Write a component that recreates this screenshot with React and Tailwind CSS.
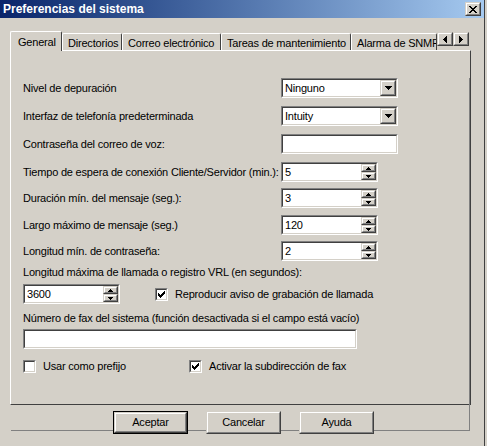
import React from "react";

// sunken field frame (classic Windows 2-pixel border)
const Sunken = ({ className = "", children }) => (
  <div className={`border border-t-[#808080] border-l-[#808080] border-b-white border-r-white ${className}`}>
    <div className="flex h-full w-full border border-t-[#404040] border-l-[#404040] border-b-[#d4d0c8] border-r-[#d4d0c8] bg-white">
      {children}
    </div>
  </div>
);

const Raised = ({ className = "", children }) => (
  <div className={`border border-t-[#d4d0c8] border-l-[#d4d0c8] border-b-[#404040] border-r-[#404040] bg-[#d4d0c8] ${className}`}>
    <div className="flex h-full w-full items-center justify-center border border-t-white border-l-white border-b-[#808080] border-r-[#808080]">
      {children}
    </div>
  </div>
);

const Combo = ({ value }) => (
  <Sunken className="h-[20px] w-[117px]">
    <div className="flex-1 pl-[2px] leading-[16px]">{value}</div>
    <Raised className="h-[16px] w-[16px]">
      <svg width="7" height="4" viewBox="0 0 7 4" shapeRendering="crispEdges">
        <path d="M0 0h7v1H0zM1 1h5v1H1zM2 2h3v1H2zM3 3h1v1H3z" fill="#000" />
      </svg>
    </Raised>
  </Sunken>
);

const Spin = ({ value }) => (
  <Sunken className="h-[20px] w-[97px]">
    <div className="flex-1 pl-[2px] leading-[16px]">{value}</div>
    <div className="flex w-[15px] flex-col">
      <Raised className="h-[8px] w-[15px]">
        <svg width="5" height="3" viewBox="0 0 5 3" shapeRendering="crispEdges">
          <path d="M2 0h1v1H2zM1 1h3v1H1zM0 2h5v1H0z" fill="#000" />
        </svg>
      </Raised>
      <Raised className="h-[8px] w-[15px]">
        <svg width="5" height="3" viewBox="0 0 5 3" shapeRendering="crispEdges">
          <path d="M0 0h5v1H0zM1 1h3v1H1zM2 2h1v1H2z" fill="#000" />
        </svg>
      </Raised>
    </div>
  </Sunken>
);

const Check = ({ checked }) => (
  <Sunken className="h-[13px] w-[13px] shrink-0">
    <div className="flex flex-1 items-center justify-center">
      {checked && (
        <svg width="7" height="7" viewBox="0 0 7 7" shapeRendering="crispEdges">
          <path d="M0 2h1v3H0zM1 3h1v3H1zM2 4h1v3H2zM3 3h1v3H3zM4 2h1v3H4zM5 1h1v3H5zM6 0h1v3H6z" fill="#000" />
        </svg>
      )}
    </div>
  </Sunken>
);

const Button = ({ children, isDefault }) => (
  <div className={`h-[23px] w-[75px] ${isDefault ? "border border-black" : ""}`}>
    <Raised className="h-full w-full">{children}</Raised>
  </div>
);

const Row = ({ label, mt, children }) => (
  <div className={`flex h-[20px] items-center ${mt}`}>
    <div className="w-[258px] whitespace-nowrap">{label}</div>
    {children}
  </div>
);

const tabs = [
  { name: "Directorios", w: "w-[60px]" },
  { name: "Correo electrónico", w: "w-[99px]" },
  { name: "Tareas de mantenimiento", w: "w-[130px]" },
  { name: "Alarma de SNMP", w: "w-[86px]" },
];

export default function App() {
  return (
    <div className="flex h-[446px] w-[487px] overflow-hidden bg-[#d4d0c8] font-['Liberation_Sans',Arial,sans-serif] text-[11px] tracking-[-0.2px] text-black">
      <div className="flex w-[484px] flex-col">
        {/* title bar */}
        <div className="flex h-[18px] items-center justify-between bg-gradient-to-r from-[#0a246a] to-[#a6caf0] pl-[3px] pr-[3px]">
          <span className="text-[12px] font-bold tracking-normal text-white">Preferencias del sistema</span>
          <Raised className="h-[14px] w-[16px]">
            <svg width="8" height="7" viewBox="0 0 8 7" shapeRendering="crispEdges">
              <path d="M0 0h2v1H0zM6 0h2v1H6zM1 1h2v1H1zM5 1h2v1H5zM2 2h4v1H2zM3 3h2v1H3zM2 4h4v1H2zM1 5h2v1H1zM5 5h2v1H5zM0 6h2v1H0zM6 6h2v1H6z" fill="#000" />
            </svg>
          </Raised>
        </div>

        <div className="pl-[10px]">
          {/* tab strip */}
          <div className="mt-[13px] flex h-[19px] items-end">
            <div className="relative z-10 -mb-px h-[20px] w-[52px] rounded-t-[2px] border-l border-t border-r border-l-white border-t-white border-r-[#404040] bg-[#d4d0c8] pl-[7px] pt-[2px]">
              General
            </div>
            {tabs.map((t) => (
              <div
                key={t.name}
                className={`h-[17px] ${t.w} overflow-hidden whitespace-nowrap rounded-t-[2px] border-l border-t border-r border-l-white border-t-white border-r-[#404040] pl-[5px] pt-px`}
              >
                {t.name}
              </div>
            ))}
            <div className="mb-[4px] flex self-end">
              <Raised className="h-[14px] w-[16px]">
                <svg width="4" height="7" viewBox="0 0 4 7" shapeRendering="crispEdges">
                  <path d="M3 0h1v7H3zM2 1h1v5H2zM1 2h1v3H1zM0 3h1v1H0z" fill="#000" />
                </svg>
              </Raised>
              <Raised className="h-[14px] w-[16px]">
                <svg width="4" height="7" viewBox="0 0 4 7" shapeRendering="crispEdges">
                  <path d="M0 0h1v7H0zM1 1h1v5H1zM2 2h1v3H2zM3 3h1v1H3z" fill="#000" />
                </svg>
              </Raised>
            </div>
          </div>

          {/* tab panel */}
          <div className="h-[355px] w-[461px] border border-t-white border-l-white border-b-[#404040] border-r-[#404040]">
            <div className="h-full border-b border-r border-b-[#808080] border-r-[#808080] pl-[12px]">
              <Row label="Nivel de depuración" mt="mt-[27px]">
                <Combo value="Ninguno" />
              </Row>
              <Row label="Interfaz de telefonía predeterminada" mt="mt-[8px]">
                <Combo value="Intuity" />
              </Row>
              <Row label="Contraseña del correo de voz:" mt="mt-[8px]">
                <Sunken className="h-[20px] w-[117px]" />
              </Row>
              <Row label="Tiempo de espera de conexión Cliente/Servidor (min.):" mt="mt-[8px]">
                <Spin value="5" />
              </Row>
              <Row label="Duración mín. del mensaje (seg.):" mt="mt-[6px]">
                <Spin value="3" />
              </Row>
              <Row label="Largo máximo de mensaje (seg.)" mt="mt-[7px]">
                <Spin value="120" />
              </Row>
              <Row label="Longitud mín. de contraseña:" mt="mt-[6px]">
                <Spin value="2" />
              </Row>

              <div className="mt-[5px] leading-[13px]">Longitud máxima de llamada o registro VRL (en segundos):</div>
              <div className="mt-[5px] flex h-[20px] items-center">
                <Spin value="3600" />
                <div className="ml-[35px] flex items-center gap-[7px]">
                  <Check checked />
                  <span>Reproducir aviso de grabación de llamada</span>
                </div>
              </div>

              <div className="mt-[8px] leading-[13px]">Número de fax del sistema (función desactivada si el campo está vacío)</div>
              <Sunken className="mt-[4px] h-[20px] w-[334px]" />

              <div className="mt-[9px] flex items-center">
                <div className="flex w-[166px] items-center gap-[7px]">
                  <Check />
                  <span>Usar como prefijo</span>
                </div>
                <div className="flex items-center gap-[7px]">
                  <Check checked />
                  <span>Activar la subdirección de fax</span>
                </div>
              </div>
            </div>
          </div>

          {/* buttons */}
          <div className="ml-[103px] mt-[6px] flex gap-[18px]">
            <Button isDefault>Aceptar</Button>
            <Button>Cancelar</Button>
            <Button>Ayuda</Button>
          </div>
        </div>
      </div>
      <div className="w-[3px] border-l border-l-[#404040]" />
    </div>
  );
}
